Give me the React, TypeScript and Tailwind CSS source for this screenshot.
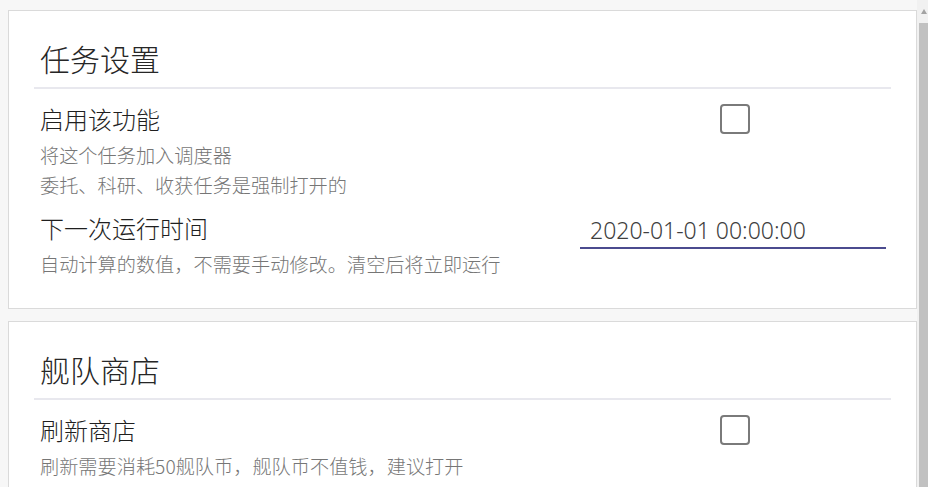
import React from "react";

const cjk = { fontFamily: '"Noto Sans CJK SC", "Noto Sans", sans-serif' };
const latin = { fontFamily: '"Noto Sans", "Open Sans", "Noto Sans CJK SC", sans-serif' };

function Checkbox() {
  return <div className="mt-[1px] ml-[140px] h-[30px] w-[30px] rounded-[4px] border-2 border-[#7a7a7a] bg-white" />;
}

function Row({
  label,
  desc,
  control,
}: {
  label: string;
  desc: string[];
  control: React.ReactNode;
}) {
  return (
    <div className="flex">
      <div className="flex-1 pl-[6px]">
        <div className="text-[24px] font-light leading-[32px] text-[#1f1f1f]">{label}</div>
        <div className="mt-[5px] text-[19.2px] font-light leading-[30px] text-[#767676]">
          {desc.map((d) => (
            <div key={d}>{d}</div>
          ))}
        </div>
      </div>
      <div className="mr-[5px] w-[306px] shrink-0">{control}</div>
    </div>
  );
}

function Card({ title, children }: { title: string; children: React.ReactNode }) {
  return (
    <div className="shrink-0 border border-[#dadada] bg-white px-[25px] pt-[27px] pb-[29px]">
      <div className="pl-[6px] text-[30px] font-light leading-[40px] text-[#262626]">{title}</div>
      <div className="mt-[9px] h-[2px] bg-[#e8e8ee]" />
      <div className="mt-[14px] flex flex-col gap-[12px]">{children}</div>
    </div>
  );
}

export default function App() {
  return (
    <div className="flex h-[487px] w-[928px] overflow-hidden bg-[#f7f7f7]" style={cjk}>
      <div className="flex flex-1 flex-col gap-[12px] pl-2 pt-[10px]">
        <Card title="任务设置">
          <Row
            label="启用该功能"
            desc={["将这个任务加入调度器", "委托、科研、收获任务是强制打开的"]}
            control={<Checkbox />}
          />
          <Row
            label="下一次运行时间"
            desc={["自动计算的数值，不需要手动修改。清空后将立即运行"]}
            control={
              <div
                className="mt-[1px] flex h-[36px] items-center border-b-[2.5px] border-[#4b4b8f] pl-[10px] text-[23px] font-light text-[#3f3f3f]"
                style={latin}
              >
                2020-01-01 00:00:00
              </div>
            }
          />
        </Card>
        <Card title="舰队商店">
          <Row
            label="刷新商店"
            desc={["刷新需要消耗50舰队币，舰队币不值钱，建议打开"]}
            control={<Checkbox />}
          />
          <Row label="" desc={[""]} control={null} />
        </Card>
      </div>
      <div className="relative w-[11px] shrink-0 bg-[#f1f1f1]">
        <svg className="absolute left-[4px] top-[9px]" width="6" height="5" viewBox="0 0 6 5">
          <polygon points="3,0 6,5 0,5" fill="#a3a3a3" />
        </svg>
        <div className="absolute left-[2px] right-0 top-[23px] bottom-0 bg-[#c1c1c1]" />
      </div>
    </div>
  );
}
